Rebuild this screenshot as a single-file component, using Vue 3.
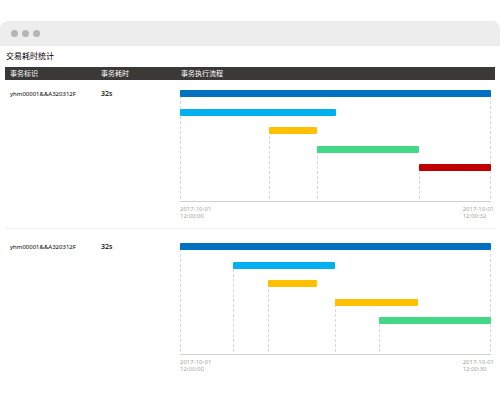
<script setup>
const transactions = [
  {
    id: 'yhm00001&&A320312F',
    cost: '32s',
    date: '2017-10-01',
    from: '12:00:00',
    to: '12:00:32',
    steps: [
      { start: 0, end: 100, color: '#0070c0' },
      { start: 0, end: 50, color: '#00b0f0' },
      { start: 28.5, end: 44, color: '#ffc000' },
      { start: 44, end: 76.7, color: '#42d885' },
      { start: 76.7, end: 100, color: '#c00000' },
    ],
  },
  {
    id: 'yhm00001&&A320312F',
    cost: '32s',
    date: '2017-10-01',
    from: '12:00:00',
    to: '12:00:30',
    steps: [
      { start: 0, end: 100, color: '#0070c0' },
      { start: 17.2, end: 50, color: '#00b0f0' },
      { start: 28.3, end: 44, color: '#ffc000' },
      { start: 49.8, end: 76.6, color: '#ffc000' },
      { start: 64, end: 100, color: '#42d885' },
    ],
  },
]

const laneStyle = (step, index) => ({
  gridRowStart: index + 1,
  marginLeft: `${step.start}%`,
  width: `${step.end - step.start}%`,
})
</script>

<template>
  <div class="window">
    <header class="chrome">
      <span class="dot"></span>
      <span class="dot"></span>
      <span class="dot"></span>
    </header>
    <main class="content">
      <h1 class="title">交易耗时统计</h1>
      <table class="stats">
        <thead>
          <tr>
            <th class="col-id" scope="col">事务标识</th>
            <th class="col-cost" scope="col">事务耗时</th>
            <th scope="col">事务执行流程</th>
          </tr>
        </thead>
        <tbody>
          <tr v-for="(item, n) in transactions" :key="n">
            <td class="id">{{ item.id }}</td>
            <td class="cost">{{ item.cost }}</td>
            <td class="flow">
              <div class="chart">
                <div
                  v-for="(step, i) in item.steps"
                  :key="i"
                  class="lane"
                  :class="{ total: i === 0 }"
                  :style="laneStyle(step, i)"
                >
                  <div class="bar" :style="{ background: step.color }"></div>
                </div>
              </div>
              <div class="axis">
                <time>{{ item.date }}<br />{{ item.from }}</time>
                <time>{{ item.date }}<br />{{ item.to }}</time>
              </div>
            </td>
          </tr>
        </tbody>
      </table>
    </main>
  </div>
</template>

<style>
body {
  background: #fff;
}
</style>

<style scoped>
.window {
  padding-top: 21px;
  font-family: "Noto Sans", "Noto Sans CJK SC", sans-serif;
  color: #000;
}
.chrome {
  display: flex;
  align-items: center;
  gap: 4px;
  height: 25px;
  padding-left: 11px;
  background: #ededed;
  border-radius: 8px 8px 0 0;
}
.dot {
  width: 7px;
  height: 7px;
  border-radius: 50%;
  background: #b5b5b5;
}
.content {
  padding: 4px 5px 0;
}
.title {
  margin: 0;
  padding: 0 1px 5px;
  font-size: 8px;
  line-height: 12px;
  font-weight: 400;
}
.stats {
  width: 100%;
  table-layout: fixed;
  border-collapse: collapse;
}
.stats th {
  padding: 0 0 0 5px;
  background: #3b3938;
  color: #fff;
  font-size: 7px;
  line-height: 13px;
  font-weight: 400;
  text-align: left;
}
.stats .col-id {
  width: 86px;
}
.stats .col-cost {
  width: 75px;
}
.stats td {
  padding: 10px 0 8px 5px;
  vertical-align: top;
}
.stats tbody tr + tr td {
  padding-top: 14px;
  border-top: 1px solid #f2f2f2;
}
.stats .id {
  font-size: 6px;
  line-height: 8px;
}
.stats .cost {
  font-size: 7px;
  line-height: 8px;
  font-weight: 500;
}
.stats .flow {
  padding-left: 4px;
  padding-right: 4px;
}
.chart {
  display: grid;
  grid-template-columns: 100%;
  grid-template-rows: repeat(6, 1fr);
  height: 111px;
  border-bottom: 1px solid #cfcfcf;
}
.lane {
  --dashes: repeating-linear-gradient(to top, transparent 0 2px, #d9d9d9 2px 5px);
  grid-column: 1;
  grid-row-end: -1;
  background: var(--dashes) left / 1px 100% no-repeat;
}
.lane.total {
  background:
    var(--dashes) left / 1px 100% no-repeat,
    var(--dashes) right / 1px 100% no-repeat;
}
.bar {
  height: 7px;
  border-radius: 1px;
}
.axis {
  display: flex;
  justify-content: space-between;
  margin-right: -3px;
  padding-top: 4px;
  color: #a3a8a0;
  font-size: 6px;
  line-height: 7px;
}
</style>
